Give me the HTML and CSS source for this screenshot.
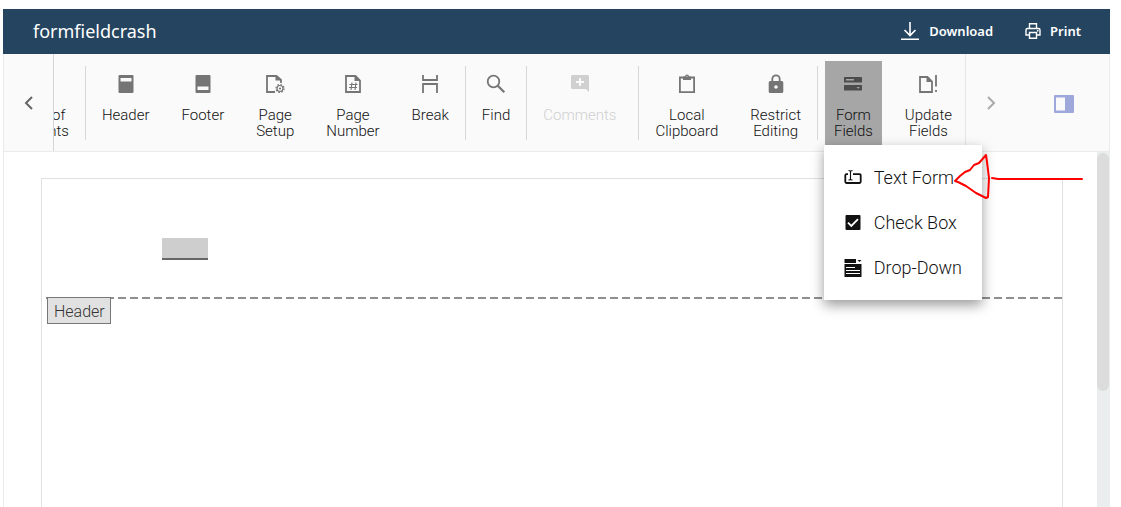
FILE: index.html
```html
<!DOCTYPE html>
<html lang="en">
<head>
	<meta charset="utf-8">
	<meta name="viewport" content="width=device-width, initial-scale=1">
	<title>formfieldcrash</title>
	<link rel="stylesheet" href="styles.css">
</head>
<body>
	<div class="editor">
		<header class="titlebar">
			<h1 class="doc-name">formfieldcrash</h1>
			<button class="title-btn" type="button">
				<svg width="20" height="20" viewBox="0 0 20 20" fill="none" stroke="currentColor" stroke-width="1.6"><path d="M10 1v13M4.500 9l5.500 5.500L15.500 9M1 18.200h18"/></svg>
				Download
			</button>
			<button class="title-btn" type="button">
				<svg width="16" height="16" viewBox="0 0 16 16" fill="none" stroke="currentColor" stroke-width="1.400"><path d="M4.500 5.500V.8h7v4.700M4.500 12H1V7q0-1.500 1.500-1.500h11Q15 5.500 15 7v5h-3.500M4.500 9.500h7v5.700h-7zM12 7.700h1.500"/></svg>
				Print
			</button>
		</header>

		<div class="toolbar">
			<button class="nav nav-left" type="button" aria-label="Scroll left">
				<svg width="16" height="16" viewBox="0 0 16 16" fill="none" stroke="currentColor" stroke-width="2"><path d="M11 2L5 8l6 6"/></svg>
			</button>
			<div class="items">
				<button class="tool" type="button">
					<svg class="icon" viewBox="0 0 20 20"><path d="M3 3h14v3H3zM3 8h14v3H3z"/></svg>
					<span>Table of<br>Contents</span>
				</button>
				<span class="sep"></span>
				<button class="tool" type="button">
					<svg class="icon" viewBox="0 0 20 20"><path fill-rule="evenodd" d="M3.500 1h13a1 1 0 0 1 1 1v16a1 1 0 0 1-1 1h-13a1 1 0 0 1-1-1V2a1 1 0 0 1 1-1zM4.500 4v3.500h11V4z"/></svg>
					<span>Header</span>
				</button>
				<button class="tool" type="button">
					<svg class="icon" viewBox="0 0 20 20"><path fill-rule="evenodd" d="M3.500 1h13a1 1 0 0 1 1 1v16a1 1 0 0 1-1 1h-13a1 1 0 0 1-1-1V2a1 1 0 0 1 1-1zM4.500 12.500V16h11v-3.500z"/></svg>
					<span>Footer</span>
				</button>
				<button class="tool" type="button">
					<svg class="icon" viewBox="0 0 20 20"><path fill="none" stroke="currentColor" stroke-width="1.800" d="M10 18H2V2h9.500L16 6v3"/><path d="M10.500 1.500v5H16z"/><circle cx="15" cy="14.500" r="3" fill="none" stroke="currentColor" stroke-width="1.200"/><circle cx="15" cy="14.500" r="4" fill="none" stroke="currentColor" stroke-width="1.200" stroke-dasharray="1.600 1.540"/><circle cx="15" cy="14.500" r="1.100"/></svg>
					<span>Page<br>Setup</span>
				</button>
				<button class="tool" type="button">
					<svg class="icon" viewBox="0 0 20 20"><path fill="none" stroke="currentColor" stroke-width="1.800" d="M3 2h9.500L17 6.500V18H3z"/><path d="M11.500 1.500v5.500H17z"/><path fill="none" stroke="currentColor" stroke-width="1.100" d="M9 8.500L8 16M13 8.500L12 16M6.500 10.500h8M6 13.500h8"/></svg>
					<span>Page<br>Number</span>
				</button>
				<button class="tool" type="button">
					<svg class="icon" viewBox="0 0 20 20"><path fill="none" stroke="currentColor" stroke-width="1.800" d="M3 1v5h14V1M3 19v-9h14v9"/></svg>
					<span>Break</span>
				</button>
				<span class="sep"></span>
				<button class="tool" type="button">
					<svg class="icon" viewBox="0 0 20 20"><circle cx="7.500" cy="7.500" r="5.800" fill="none" stroke="currentColor" stroke-width="1.800"/><path fill="none" stroke="currentColor" stroke-width="2.200" d="M11.800 11.800l6.500 6.500"/></svg>
					<span>Find</span>
				</button>
				<span class="sep"></span>
				<button class="tool tool-comments" type="button" disabled>
					<svg class="icon" viewBox="0 0 20 20"><path fill-rule="evenodd" d="M2.500 1h15A1.500 1.500 0 0 1 19 2.500V18l-3-3H2.500A1.500 1.500 0 0 1 1 13.500v-11A1.500 1.500 0 0 1 2.500 1zM9 4v3H6v2h3v3h2V9h3V7h-3V4z"/></svg>
					<span>Comments</span>
				</button>
				<span class="sep"></span>
				<button class="tool" type="button">
					<svg class="icon" viewBox="0 0 20 20"><path fill="none" stroke="currentColor" stroke-width="1.800" d="M2.900 3.500h14.200v14.600H2.900z"/><path fill-rule="evenodd" d="M6 2.500h2a2 2 0 0 1 4 0h2V6H6zM9.200 2.500a.8.8 0 0 0 1.600 0 .8.8 0 0 0-1.600 0z"/></svg>
					<span>Local<br>Clipboard</span>
				</button>
				<button class="tool" type="button">
					<svg class="icon" viewBox="0 0 20 20"><path fill="none" stroke="currentColor" stroke-width="1.800" d="M6.300 8V5a3.700 3.700 0 0 1 7.400 0v3"/><path fill-rule="evenodd" d="M4.300 7h11.400a1.600 1.600 0 0 1 1.600 1.600v8.800a1.600 1.600 0 0 1-1.600 1.600H4.300a1.600 1.600 0 0 1-1.600-1.600V8.600A1.600 1.600 0 0 1 4.300 7zM10 11.200a1.800 1.800 0 1 0 0 3.600 1.800 1.800 0 0 0 0-3.600z"/></svg>
					<span>Restrict<br>Editing</span>
				</button>
				<span class="sep"></span>
				<button class="tool active" type="button" aria-haspopup="true" aria-expanded="true">
					<svg class="icon" viewBox="0 0 20 20"><path fill-rule="evenodd" d="M1.500 3h17a.5.500 0 0 1 .5.500v4.500a.5.500 0 0 1-.5.500h-17A.5.500 0 0 1 1 8V3.500a.5.500 0 0 1 .5-.5zM3 5v1.500h8V5zM1.500 11h17a.5.500 0 0 1 .5.500V16a.5.500 0 0 1-.5.500h-17A.5.500 0 0 1 1 16v-4.500a.5.500 0 0 1 .5-.5zM13.500 12.900l1.700 1.800 1.700-1.800z"/></svg>
					<span>Form<br>Fields</span>
				</button>
				<button class="tool" type="button">
					<svg class="icon" viewBox="0 0 20 20"><path fill="none" stroke="currentColor" stroke-width="1.800" d="M2 3h7.500L14 7.500V18H2z"/><path d="M8.500 2.500V8H14z"/><path fill="none" stroke="currentColor" stroke-width="1.800" d="M18 1v11.500M18 16v2"/></svg>
					<span>Update<br>Fields</span>
				</button>
			</div>
			<button class="nav nav-right" type="button" aria-label="Scroll right">
				<svg width="16" height="16" viewBox="0 0 16 16" fill="none" stroke="currentColor" stroke-width="2"><path d="M5 2l6 6-6 6"/></svg>
			</button>
			<button class="pane-btn" type="button" aria-label="Properties pane">
				<svg width="20" height="18" viewBox="0 0 20 18"><path fill="#9fa8da" fill-rule="evenodd" d="M1 0h18a1 1 0 0 1 1 1v16a1 1 0 0 1-1 1H1a1 1 0 0 1-1-1V1a1 1 0 0 1 1-1zM2 2.500v13h9v-13z"/></svg>
			</button>

			<div class="dropdown">
				<ul class="menu">
					<li><button class="menu-item" type="button">
						<svg width="18" height="18" viewBox="0 0 18 18" fill="none" stroke="currentColor"><path stroke-width="1.800" d="M4 5.200H2.500q-1.200 0-1.200 1.200v6.400q0 1.200 1.200 1.200h13q1.200 0 1.200-1.200V6.400q0-1.200-1.200-1.200H9"/><path stroke-width="1.100" d="M4.500 1.500q2 0 2 1 0-1 2-1M6.500 2v8.500M4.500 11q2 0 2-1 0 1 2 1"/></svg>
						Text Form
					</button></li>
					<li><button class="menu-item" type="button">
						<svg width="18" height="18" viewBox="0 0 18 18"><rect x="1.500" y="1" width="15" height="15" rx="1" fill="currentColor"/><path fill="none" stroke="#fff" stroke-width="1.800" d="M4 8.700l3.300 3.300L14 5.200"/></svg>
						Check Box
					</button></li>
					<li><button class="menu-item" type="button">
						<svg width="18" height="18" viewBox="0 0 18 18" fill="currentColor"><path d="M.5 0h11.500v4H.5zM13.500 1h4l-2 2z"/><path fill-rule="evenodd" d="M.5 5h17v13H.5zM2 8v1h9V8zM2 11v1h14v-1zM2 14v1h14v-1z"/></svg>
						Drop-Down
					</button></li>
				</ul>
				<svg class="arrow" width="132" height="48" viewBox="0 0 132 48" fill="none" stroke="#f00" stroke-width="2" stroke-linecap="round" stroke-linejoin="round"><path d="M2 29L7 24l5-4 5-2 4-5 5-2 7-8 1 7 2 16-1 19-2 1-10-5-10-7-8-4z"/><path d="M39 26l6 1h84"/></svg>
			</div>
		</div>

		<main class="viewer">
			<div class="page">
				<div class="page-header">
					<input class="form-field" type="text" aria-label="Text form field">
				</div>
				<span class="header-tag">Header</span>
			</div>
			<div class="scrollbar"><div class="thumb"></div></div>
		</main>
	</div>
</body>
</html>
```
FILE: styles.css
```css
* {
	box-sizing: border-box;
}

body {
	margin: 0;
	background-color: #fff;
	font-family: Roboto, sans-serif;
	font-weight: 300;
	color: #111;
}

button {
	margin: 0;
	padding: 0;
	border: 0;
	background: none;
	font-family: inherit;
	font-weight: inherit;
	color: inherit;
	cursor: pointer;
}

.editor {
	display: flex;
	flex-direction: column;
	height: 100vh;
	padding: 9px 11px 0 3px;
}

/* title bar */
.titlebar {
	display: flex;
	flex: none;
	align-items: center;
	gap: 32px;
	height: 45px;
	padding: 0 29px 2px 30px;
	background-color: #25445f;
	color: #fff;
	font-family: "Noto Sans", sans-serif;
}

.doc-name {
	flex: 1;
	margin: 0;
	font-size: 18px;
	font-weight: 400;
}

.title-btn {
	display: flex;
	align-items: center;
	gap: 9px;
	font-size: 13px;
	font-weight: 600;
}

/* toolbar */
.toolbar {
	position: relative;
	display: flex;
	flex: none;
	height: 98px;
	border: 1px solid #ebebeb;
	border-width: 0 1px 1px;
	background-color: #fafafa;
}

.nav {
	display: flex;
	flex: none;
	align-items: center;
	justify-content: center;
	width: 50px;
	color: #666;
}

.nav-left {
	border-right: 1px solid #d5d5d5;
}

.nav-right {
	border-left: 1px solid #e5e5e5;
	color: #aaa;
}

.items {
	display: flex;
	flex: 1;
	justify-content: flex-end;
	min-width: 0;
	padding-top: 7px;
	overflow: hidden;
}

.tool {
	display: flex;
	flex: none;
	flex-direction: column;
	align-items: center;
	gap: 13px;
	height: 84px;
	margin: 0 7px;
	padding: 13px 9px 0;
	font-size: 15px;
	line-height: 16px;
}

.tool:last-child {
	margin-right: 4px;
}

.icon {
	width: 20px;
	height: 20px;
	fill: currentColor;
	color: #757575;
}

.active {
	background-color: #a6a6a6;
}

.active .icon {
	color: #4c4c4c;
}

.tool-comments {
	margin-right: 13px;
}

.tool:disabled,
.tool:disabled .icon {
	color: #d0d0d0;
}

.sep {
	flex: none;
	width: 1px;
	height: 74px;
	margin-top: 5px;
	background-color: #d8d8d8;
}

.pane-btn {
	display: flex;
	flex: none;
	align-items: center;
	margin: 2px 35px 0 39px;
}

/* form fields menu */
.dropdown {
	position: absolute;
	z-index: 2;
	top: 91px;
	right: 127px;
}

.menu {
	margin: 0;
	padding: 10px 0;
	list-style: none;
	background-color: #fff;
	box-shadow: 0 5px 12px rgba(0, 0, 0, .4);
}

.menu-item {
	display: flex;
	align-items: center;
	gap: 12px;
	height: 45px;
	padding: 0 20px;
	font-size: 18px;
	color: #111;
}

.arrow {
	position: absolute;
	top: 7px;
	right: -103px;
}

/* document */
.viewer {
	display: flex;
	flex: 1;
	min-height: 0;
	border-left: 1px solid #ebebeb;
	overflow: hidden;
}

.page {
	flex: 1;
	margin: 26px 34px 0 37px;
	border: 1px solid #e0e0e0;
	border-bottom: 0;
}

.page-header {
	height: 120px;
	padding: 59px 0 0 120px;
	background: repeating-linear-gradient(270deg, #8f8f8f 0 8px, transparent 8px 12px) bottom / 100% 2px no-repeat;
}

.form-field {
	display: block;
	width: 46px;
	height: 22px;
	padding: 0;
	border: 0;
	border-bottom: 2px solid #666;
	background-color: #cecece;
}

.header-tag {
	display: block;
	width: max-content;
	margin: -2px 0 0 5px;
	padding: 5px 5px 2px 6px;
	border: 1px solid #777;
	background-color: #e1e1e1;
	font-size: 16px;
	line-height: 18px;
	color: #333;
}

.scrollbar {
	flex: none;
	width: 13px;
	padding-top: 1px;
	background-color: #eaeeef;
}

.thumb {
	width: 12px;
	height: 238px;
	border-radius: 6px;
	background-color: #dcdcdc;
}
```
